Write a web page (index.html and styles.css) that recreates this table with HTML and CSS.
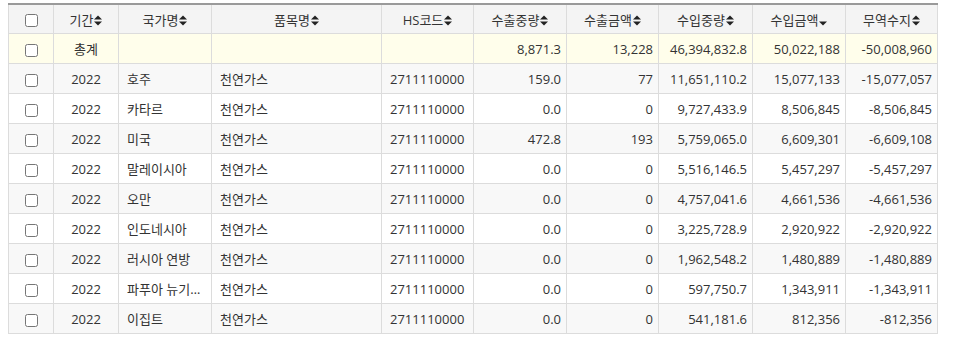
FILE: index.html
```html
<!DOCTYPE html>
<html lang="ko">
<head>
<meta charset="utf-8">
<link rel="stylesheet" href="styles.css">
</head>
<body>
<table class="grid">
  <colgroup>
    <col class="c-chk"><col class="c-year"><col class="c-nat"><col class="c-item"><col class="c-hs">
    <col class="c-n1"><col class="c-n2"><col class="c-n3"><col class="c-n4"><col class="c-n5">
  </colgroup>
  <thead>
    <tr>
      <th><input type="checkbox" class="chk"></th>
      <th>기간<svg class="sort" viewBox="0 0 8 11"><path d="M0 4.5 L4 0.5 L8 4.5Z M0 6.5 L4 10.5 L8 6.5Z"/></svg></th>
      <th>국가명<svg class="sort" viewBox="0 0 8 11"><path d="M0 4.5 L4 0.5 L8 4.5Z M0 6.5 L4 10.5 L8 6.5Z"/></svg></th>
      <th>품목명<svg class="sort" viewBox="0 0 8 11"><path d="M0 4.5 L4 0.5 L8 4.5Z M0 6.5 L4 10.5 L8 6.5Z"/></svg></th>
      <th>HS코드<svg class="sort" viewBox="0 0 8 11"><path d="M0 4.5 L4 0.5 L8 4.5Z M0 6.5 L4 10.5 L8 6.5Z"/></svg></th>
      <th>수출중량<svg class="sort" viewBox="0 0 8 11"><path d="M0 4.5 L4 0.5 L8 4.5Z M0 6.5 L4 10.5 L8 6.5Z"/></svg></th>
      <th>수출금액<svg class="sort" viewBox="0 0 8 11"><path d="M0 4.5 L4 0.5 L8 4.5Z M0 6.5 L4 10.5 L8 6.5Z"/></svg></th>
      <th>수입중량<svg class="sort" viewBox="0 0 8 11"><path d="M0 4.5 L4 0.5 L8 4.5Z M0 6.5 L4 10.5 L8 6.5Z"/></svg></th>
      <th>수입금액<svg class="sort" viewBox="0 0 8 11"><path d="M0 6.5 L4 10.5 L8 6.5Z"/></svg></th>
      <th>무역수지<svg class="sort" viewBox="0 0 8 11"><path d="M0 4.5 L4 0.5 L8 4.5Z M0 6.5 L4 10.5 L8 6.5Z"/></svg></th>
    </tr>
  </thead>
  <tbody>
    <tr class="total">
      <td class="ctr"><input type="checkbox" class="chk"></td>
      <td class="ctr">총계</td><td></td><td></td><td></td>
      <td class="num">8,871.3</td><td class="num">13,228</td><td class="num">46,394,832.8</td><td class="num">50,022,188</td><td class="num">-50,008,960</td>
    </tr>
    <tr class="odd">
      <td class="ctr"><input type="checkbox" class="chk"></td>
      <td class="ctr">2022</td><td class="txt">호주</td><td class="txt">천연가스</td><td class="txt">2711110000</td>
      <td class="num">159.0</td><td class="num">77</td><td class="num">11,651,110.2</td><td class="num">15,077,133</td><td class="num">-15,077,057</td>
    </tr>
    <tr>
      <td class="ctr"><input type="checkbox" class="chk"></td>
      <td class="ctr">2022</td><td class="txt">카타르</td><td class="txt">천연가스</td><td class="txt">2711110000</td>
      <td class="num">0.0</td><td class="num">0</td><td class="num">9,727,433.9</td><td class="num">8,506,845</td><td class="num">-8,506,845</td>
    </tr>
    <tr class="odd">
      <td class="ctr"><input type="checkbox" class="chk"></td>
      <td class="ctr">2022</td><td class="txt">미국</td><td class="txt">천연가스</td><td class="txt">2711110000</td>
      <td class="num">472.8</td><td class="num">193</td><td class="num">5,759,065.0</td><td class="num">6,609,301</td><td class="num">-6,609,108</td>
    </tr>
    <tr>
      <td class="ctr"><input type="checkbox" class="chk"></td>
      <td class="ctr">2022</td><td class="txt">말레이시아</td><td class="txt">천연가스</td><td class="txt">2711110000</td>
      <td class="num">0.0</td><td class="num">0</td><td class="num">5,516,146.5</td><td class="num">5,457,297</td><td class="num">-5,457,297</td>
    </tr>
    <tr class="odd">
      <td class="ctr"><input type="checkbox" class="chk"></td>
      <td class="ctr">2022</td><td class="txt">오만</td><td class="txt">천연가스</td><td class="txt">2711110000</td>
      <td class="num">0.0</td><td class="num">0</td><td class="num">4,757,041.6</td><td class="num">4,661,536</td><td class="num">-4,661,536</td>
    </tr>
    <tr>
      <td class="ctr"><input type="checkbox" class="chk"></td>
      <td class="ctr">2022</td><td class="txt">인도네시아</td><td class="txt">천연가스</td><td class="txt">2711110000</td>
      <td class="num">0.0</td><td class="num">0</td><td class="num">3,225,728.9</td><td class="num">2,920,922</td><td class="num">-2,920,922</td>
    </tr>
    <tr class="odd">
      <td class="ctr"><input type="checkbox" class="chk"></td>
      <td class="ctr">2022</td><td class="txt">러시아 연방</td><td class="txt">천연가스</td><td class="txt">2711110000</td>
      <td class="num">0.0</td><td class="num">0</td><td class="num">1,962,548.2</td><td class="num">1,480,889</td><td class="num">-1,480,889</td>
    </tr>
    <tr>
      <td class="ctr"><input type="checkbox" class="chk"></td>
      <td class="ctr">2022</td><td class="txt"><div class="clip">파푸아 뉴기니</div></td><td class="txt">천연가스</td><td class="txt">2711110000</td>
      <td class="num">0.0</td><td class="num">0</td><td class="num">597,750.7</td><td class="num">1,343,911</td><td class="num">-1,343,911</td>
    </tr>
    <tr class="odd">
      <td class="ctr"><input type="checkbox" class="chk"></td>
      <td class="ctr">2022</td><td class="txt">이집트</td><td class="txt">천연가스</td><td class="txt">2711110000</td>
      <td class="num">0.0</td><td class="num">0</td><td class="num">541,181.6</td><td class="num">812,356</td><td class="num">-812,356</td>
    </tr>
  </tbody>
</table>
</body>
</html>
```
FILE: styles.css
```css
html, body {
  background: #ffffff;
}
body {
  margin: 3px 8px 0 8px;
  font-family: "Open Sans", "Noto Sans CJK KR", sans-serif;
  font-size: 13px;
  color: #333333;
}
.grid {
  border-collapse: collapse;
  table-layout: fixed;
  width: 930px;
  border-top: 2px solid #9a9a9a;
}
.c-chk { width: 45px; }
.c-year { width: 65px; }
.c-nat { width: 93px; }
.c-item { width: 170px; }
.c-hs { width: 92px; }
.c-n1 { width: 93px; }
.c-n2 { width: 92px; }
.c-n3 { width: 94px; }
.c-n4 { width: 93px; }
.c-n5 { width: 92px; }
.grid th, .grid td {
  border: 1px solid #dcdcdc;
  height: 29px;
  padding: 0 5px;
  white-space: nowrap;
  overflow: hidden;
}
.grid th {
  background: #f4f4f4;
  font-weight: normal;
  text-align: center;
  height: 28px;
}
.grid tr:first-child th {
  border-top: none;
}
.sort {
  width: 8px;
  height: 11px;
  vertical-align: -1px;
  margin-left: 1px;
  fill: #222;
}
.total td {
  background: #fffeeb;
}
.odd td {
  background: #f8f8f8;
}
.ctr { text-align: center; }
.grid td.txt { text-align: left; padding: 0 10px 0 8px; }
.num { text-align: right; }
.clip {
  overflow: hidden;
  text-overflow: ellipsis;
  white-space: nowrap;
}
.chk {
  margin: 0;
  vertical-align: middle;
  width: 13px;
  height: 13px;
}
```
